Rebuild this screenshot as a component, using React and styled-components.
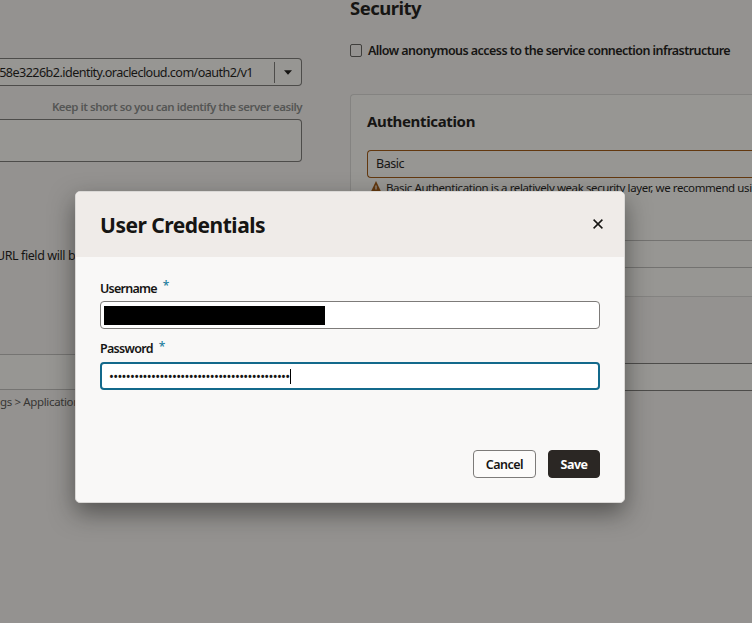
import React from 'react';
import styled, { createGlobalStyle } from 'styled-components';

const GlobalStyle = createGlobalStyle`
  * { box-sizing: border-box; }
  body {
    margin: 0;
    overflow: hidden;
    background: #949290;
    color: #161513;
    font-family: "Noto Sans", "Open Sans", sans-serif;
    font-size: 12.5px;
  }
`;

const Page = styled.div`
  position: relative;
  display: grid;
  grid-template-columns: 302px 1fr;
  column-gap: 48px;
  width: 752px;
  height: 623px;
  overflow: hidden;
  white-space: nowrap;
  background: #949290;
`;

const Column = styled.section`
  display: flex;
  flex-direction: column;
  min-width: 0;
`;

const ServerColumn = styled(Column)`
  padding-top: 58px;
`;

const Text = styled.span`
  display: block;
  flex: none;
  padding-top: ${(p) => p.$drop || 0}px;
  font-size: ${(p) => p.$size || 12.5}px;
  font-weight: ${(p) => p.$weight || 400};
  letter-spacing: ${(p) => p.$tracking || 0}px;
  line-height: ${(p) => p.$line || 20}px;
  color: ${(p) => p.$color || 'inherit'};
`;

const UrlSelect = styled.div`
  display: flex;
  align-items: center;
  justify-content: flex-end;
  height: 28px;
  border: 1px solid #4d4c4a;
  border-left: 0;
  border-radius: 0 4px 4px 0;
  background: #979693;
`;

const Divider = styled.i`
  flex: none;
  width: 1px;
  height: 21px;
  margin-left: 21px;
  background: #4d4c4a;
`;

const CaretCell = styled.div`
  display: flex;
  flex: none;
  align-items: center;
  width: 26px;
  padding-left: 9px;
`;

const Caret = styled.svg`
  width: 8px;
  height: 5px;
`;

const Hint = styled.div`
  display: flex;
  justify-content: flex-end;
  margin: 12px 0 4px;
`;

const DescriptionArea = styled.div`
  height: 43px;
  border: 1px solid #4d4c4a;
  border-left: 0;
  border-radius: 0 4px 4px 0;
  background: #979693;
`;

const Note = styled.div`
  margin: 84px 0 88px -4px;
`;

const ReadonlyField = styled.div`
  height: 36px;
  margin-bottom: 3px;
  border: solid #757472;
  border-width: 1px 0;
  background: #979693;
`;

const SecurityHeading = styled.div`
  margin-top: -4px;
  height: 24px;
`;

const CheckRow = styled.label`
  display: flex;
  align-items: center;
  gap: 6px;
  height: 20px;
  margin: 20px 0 34px;
`;

const CheckBox = styled.i`
  flex: none;
  width: 12px;
  height: 13px;
  border: 1.5px solid #3f3e3c;
  border-radius: 2px;
`;

const AuthPanel = styled.div`
  display: flex;
  flex-direction: column;
  height: 203px;
  border: 1px solid #848381;
  border-right: 0;
  border-radius: 4px 0 0 0;
  background: #979693;
`;

const AuthBody = styled.div`
  padding: 16px 0 0 16px;
  height: 145px;
`;

const AuthSelect = styled.div`
  height: 28px;
  margin-top: 19px;
  padding: 3px 8px;
  border: 1px solid #63380f;
  border-right: 0;
  border-radius: 4px 0 0 4px;
`;

const Warning = styled.div`
  display: flex;
  gap: 4px;
  height: 16px;
  margin: 2px 0 0 3px;
`;

const WarningIcon = styled.svg`
  flex: none;
  width: 12px;
  height: 13px;
  margin-top: 1px;
`;

const CollapsedRow = styled.div`
  height: 28px;
  border: solid #737270;
  border-width: 1px 0;
`;

const OptionSelect = styled.div`
  height: 28px;
  margin-top: 66px;
  border: solid #4d4c4a;
  border-width: 1px 0;
  background: #979693;
`;

const DialogFrame = styled.div`
  position: absolute;
  left: 75px;
  top: 191px;
  width: 550px;
  height: 312px;
  border-radius: 5px;
  box-shadow: 0 10px 24px rgba(22, 21, 19, 0.5);
`;

const Dialog = styled.div`
  display: flex;
  flex-direction: column;
  height: 100%;
  overflow: hidden;
  border: 1px solid #dad8d6;
  border-radius: 5px;
  background: #f9f8f7;
`;

const DialogHeader = styled.header`
  display: flex;
  align-items: center;
  justify-content: space-between;
  height: 65px;
  padding: 0 20px 0 24px;
  background: #efebe8;
`;

const CloseIcon = styled.svg`
  width: 12px;
  height: 12px;
  margin-bottom: 1px;
`;

const DialogBody = styled.div`
  flex: 1;
  padding: 21px 24px 0;
`;

const FieldLabel = styled.label`
  display: flex;
  gap: 6px;
  height: 20px;
`;

const Required = styled.span`
  color: #227e9e;
  font-size: 12px;
  font-weight: 500;
  line-height: 15px;
`;

const UsernameField = styled.div`
  height: 28px;
  margin: 3px 0 10px;
  padding: 4px 3px;
  border: 1px solid #7d7b79;
  border-radius: 4px;
  background: #fff;
`;

const Redaction = styled.div`
  width: 221px;
  height: 19px;
  background: #000;
`;

const PasswordField = styled.div`
  display: flex;
  align-items: center;
  height: 28px;
  margin-top: 3px;
  padding-left: 7px;
  border: 2px solid #13698b;
  border-radius: 4px;
  background: #fff;
`;

const TextCursor = styled.i`
  width: 1px;
  height: 15px;
  background: #000;
`;

const Actions = styled.footer`
  display: flex;
  justify-content: flex-end;
  gap: 12px;
  padding: 0 24px 24px;
`;

const Button = styled.button`
  display: flex;
  align-items: center;
  justify-content: center;
  width: ${(p) => (p.$primary ? 52 : 63)}px;
  height: 28px;
  padding: 1px 0 0;
  border: 1px solid ${(p) => (p.$primary ? '#2b2724' : '#7d7b79')};
  border-radius: 4px;
  background: ${(p) => (p.$primary ? '#2b2724' : '#fcfbfa')};
  color: ${(p) => (p.$primary ? '#fff' : '#161513')};
  font-family: inherit;
`;

const DOTS = '•'.repeat(43);

function Field({ label, tracking, line, children }) {
  return (
    <>
      <FieldLabel>
        <Text $weight={600} $tracking={tracking} $line={line}>{label}</Text>
        <Required>*</Required>
      </FieldLabel>
      {children}
    </>
  );
}

export default function App() {
  return (
    <>
      <GlobalStyle />
      <Page>
        <ServerColumn>
          <UrlSelect>
            <Text $size={12.6} $tracking={-0.56} $drop={2}>58e3226b2.identity.oraclecloud.com/oauth2/v1</Text>
            <Divider />
            <CaretCell>
              <Caret viewBox="0 0 8 5"><path d="M0 .2h8L4 4.8z" fill="#161513" /></Caret>
            </CaretCell>
          </UrlSelect>
          <Hint>
            <Text $size={11.5} $weight={600} $tracking={-0.49} $line={17} $color="#555655">
              Keep it short so you can identify the server easily
            </Text>
          </Hint>
          <DescriptionArea />
          <Note><Text $tracking={-0.42}>URL field will be</Text></Note>
          <ReadonlyField />
          <Text $size={11.5} $tracking={-0.36} $line={18} $color="#373634">gs &gt; Application</Text>
        </ServerColumn>

        <Column>
          <SecurityHeading>
            <Text $size={18.5} $weight={700} $tracking={-0.53} $line={24}>Security</Text>
          </SecurityHeading>
          <CheckRow>
            <CheckBox />
            <Text $weight={600} $tracking={-0.54} $drop={2}>
              Allow anonymous access to the service connection infrastructure
            </Text>
          </CheckRow>
          <AuthPanel>
            <AuthBody>
              <Text $size={15} $weight={700} $tracking={-0.35}>Authentication</Text>
              <AuthSelect><Text $tracking={-0.47}>Basic</Text></AuthSelect>
              <Warning>
                <WarningIcon viewBox="0 0 12 13">
                  <path d="M6 0 12 12.5H0z" fill="#63380f" />
                  <path d="M6 4.5v4" stroke="#979693" strokeWidth="1.2" />
                </WarningIcon>
                <Text $size={11.5} $tracking={-0.41} $line={16}>
                  Basic Authentication is a relatively weak security layer, we recommend using
                </Text>
              </Warning>
            </AuthBody>
            <CollapsedRow />
          </AuthPanel>
          <OptionSelect />
        </Column>

        <DialogFrame>
          <Dialog role="dialog">
            <DialogHeader>
              <Text $size={21} $weight={700} $tracking={-0.5} $line={32}>User Credentials</Text>
              <CloseIcon viewBox="0 0 12 12">
                <path d="M1.6 1.6l8.8 8.8M10.4 1.6L1.6 10.4" stroke="#161513" strokeWidth="1.5" />
              </CloseIcon>
            </DialogHeader>
            <DialogBody>
              <Field label="Username" tracking={-0.75} line={21}>
                <UsernameField><Redaction /></UsernameField>
              </Field>
              <Field label="Password" tracking={-0.7} line={19}>
                <PasswordField>
                  <Text $size={13} $tracking={-0.69}>{DOTS}</Text>
                  <TextCursor />
                </PasswordField>
              </Field>
            </DialogBody>
            <Actions>
              <Button><Text $weight={600} $tracking={-0.52} $line={21}>Cancel</Text></Button>
              <Button $primary><Text $weight={700} $tracking={-0.5} $line={21}>Save</Text></Button>
            </Actions>
          </Dialog>
        </DialogFrame>
      </Page>
    </>
  );
}
